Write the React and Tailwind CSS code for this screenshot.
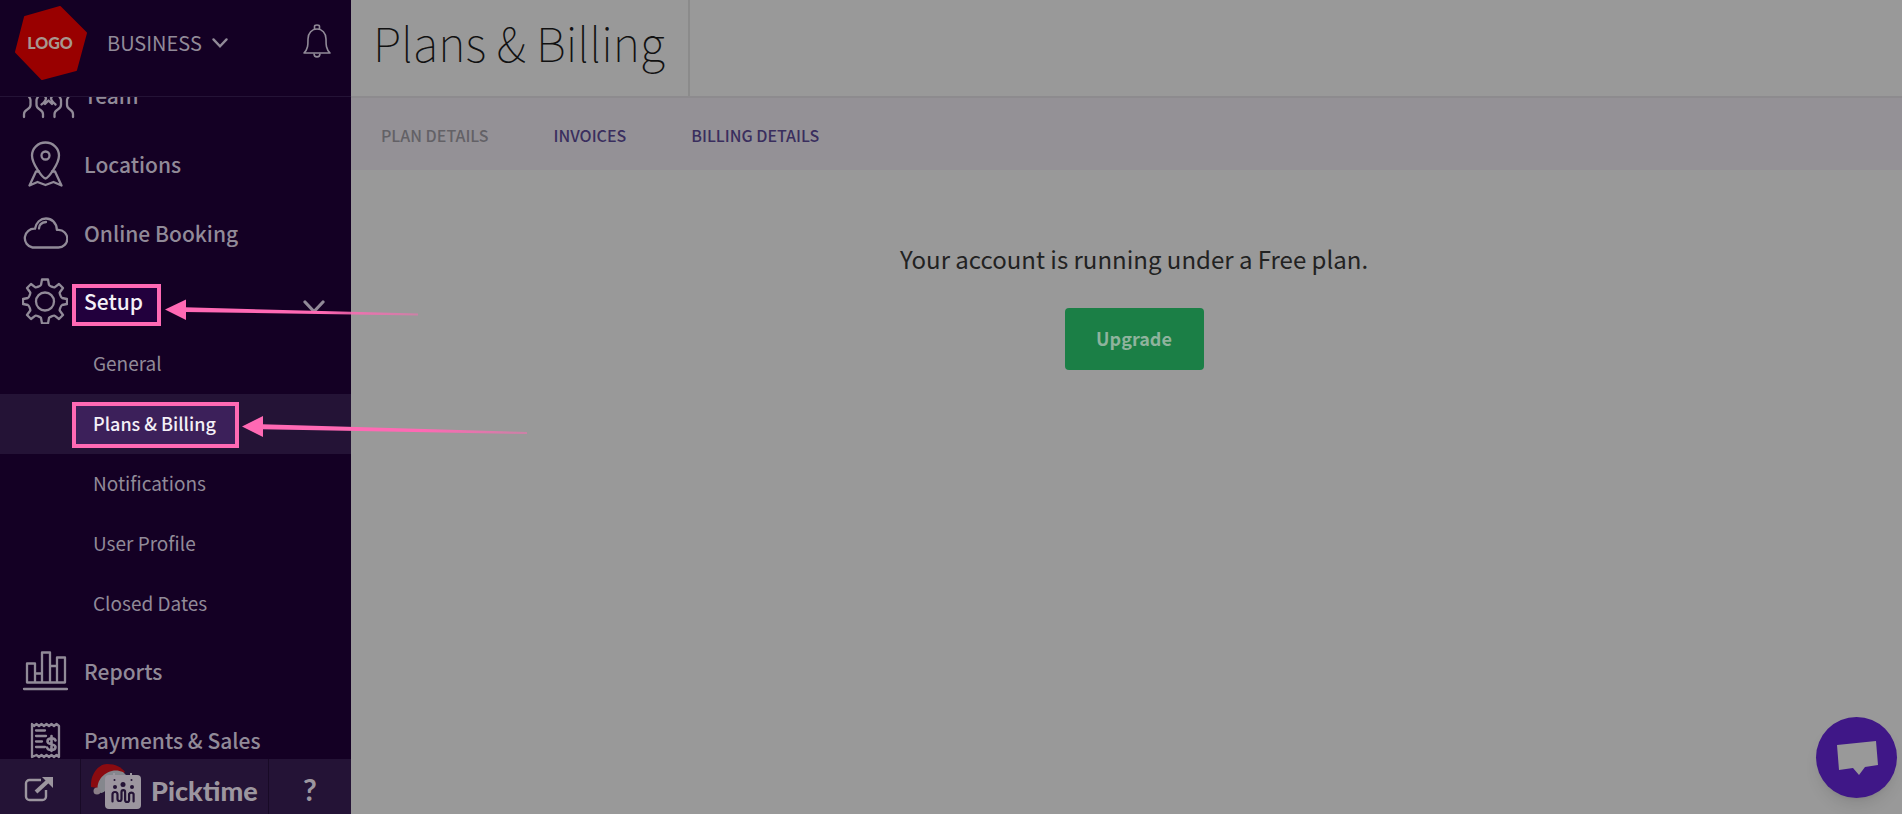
import React from "react";

const stroke = {
  fill: "none",
  stroke: "currentColor",
  strokeWidth: 2.3,
  strokeLinecap: "round",
  strokeLinejoin: "round",
};

function TeamIcon() {
  return (
    <svg width="53" height="48" viewBox="0 0 53 48" aria-hidden="true" {...stroke}>
      <path d="M2 46v-3c0-5 6.500-4 6.500-9v-5c0-2-3-4-3-8s2-8 6-8 6 4 6 8-3 6-3 8v5c0 5 6.500 4 6.500 9v3" />
      <path d="M32.500 46v-3c0-5 6.500-4 6.500-9v-5c0-2-3-4-3-8s2-8 6-8 6 4 6 8-3 6-3 8v5c0 5 6 4 6 9v3" />
      <path d="M19.500 33.500c2-2 4-2 4.500-6 0-2-3-3-3-7s2-7 5.500-7 5.500 3 5.500 7-3 5-3 7c.5 4 3 4 4.500 6M23 33l3.500-3.500 3.500 3.500" />
    </svg>
  );
}

function LocationIcon() {
  return (
    <svg width="46" height="46" viewBox="0 0 46 46" aria-hidden="true" {...stroke}>
      <path d="M23.500 37.500C21 37.500 10 23 10 14.500a13.500 13 0 0 1 27 0c0 8.500-11 23-13.500 23Z" />
      <circle cx="23.500" cy="14.500" r="4" />
      <path d="M17 30.500h-3L7.500 44.500l8-3.500 8 3 8-3 8 3.500L33 30.500h-3" />
    </svg>
  );
}

function CloudIcon() {
  return (
    <svg width="46" height="46" viewBox="0 0 46 46" aria-hidden="true" {...stroke}>
      <path d="M10.500 37.500h26a8.800 8.800 0 0 0 0-17.600h-1.600C34.500 12.500 29.500 8.500 24 8.500S14 12.500 13 18.700A9.500 9.500 0 0 0 10.500 37.500Z" />
      <path d="M17 18.500c0-3.800 3-6 7-6.500" />
    </svg>
  );
}

function GearIcon() {
  return (
    <svg width="46" height="46" viewBox="0 0 46 46" aria-hidden="true" {...stroke}>
      <path d="M20 1.500h6l1 5.500c0 .8 5 2.800 5.600 2.300L37 6l4 4-3.300 4.500c-.5.600 1.500 5.300 2.300 5.500l5 1v5l-5 1c-.8.200-2.800 5-2.300 5.500L41 37l-4 4-4.400-3.300c-.6-.5-5.600 1.500-5.600 2.300l-1 5.500h-6L19 40c0-.8-5-2.800-5.600-2.300L9 41l-4-4 3.300-4.500c.5-.5-1.500-5.300-2.300-5.500l-5-1v-5l5-1c.8-.2 2.800-4.900 2.300-5.500L5 10l4-4 4.400 3.300c.6.500 5.600-1.500 5.600-2.300Z" />
      <circle cx="23" cy="23.500" r="9" />
    </svg>
  );
}

function ReportsIcon() {
  return (
    <svg width="46" height="46" viewBox="0 0 46 46" aria-hidden="true" {...stroke}>
      <path d="M5 15.500h8v19H5zM20 4.500h8v30h-8zM35 9.500h8v25h-8zM13 25.500h7v9h-7zM28 18h7v16.500h-7zM2 41h43" />
    </svg>
  );
}

function ReceiptIcon() {
  return (
    <svg width="46" height="46" viewBox="0 0 46 46" aria-hidden="true" {...stroke}>
      <path d="M10 40V7l2 2 2.500-2L17 9l2.500-2L22 9l2.500-2L27 9l2.500-2L32 9l2.500-2L37 9v31l-2.500-2-2.500 2-2.500-2-2.500 2-2.500-2-2.500 2-2.500-2-2.500 2-2.500-2Z" />
      <path d="M14 13.500h9M14 19h10M14 24.500h6M14 30h9" />
      <path d="M33.500 23.500c-1-3-8-3-8 1 0 3.500 8 2 8 5.500 0 4-7.500 4-8.500.5M29.500 19v15" strokeWidth="2.600" />
    </svg>
  );
}

function Chevron({ size }) {
  return (
    <svg width={size} height={size} viewBox="0 0 22 22" aria-hidden="true" fill="none" stroke="currentColor" strokeWidth="3.200" strokeLinecap="round">
      <path d="m2 6 9 9.500L20 6" />
    </svg>
  );
}

function BrandMark() {
  return (
    <svg width="54" height="48" viewBox="0 0 54 48" aria-hidden="true">
      <path d="M1 24C0 12 8 1 17 1c9 0 14 3 18 8L15 26Z" fill="#8a0b10" />
      <path d="M8 28C5 15 20 3 33 9l5 5-23 14c-2 2-5 3-7 0Z" fill="#85878d" />
      <circle cx="7" cy="28" r="3.500" fill="#8a7f88" />
      <rect x="15" y="12" width="36" height="34" rx="4" fill="#9c969f" />
      <path d="M24 10v4M41 10v4" stroke="#9c969f" strokeWidth="2" />
      <g fill="#241336">
        <circle cx="25" cy="24" r="2" />
        <circle cx="33" cy="21.500" r="2.500" />
        <circle cx="42" cy="24" r="2" />
        <circle cx="24.500" cy="17" r="1" />
        <circle cx="41.500" cy="17" r="1" />
      </g>
      <path d="M22.500 38.500v-7a2.500 2.500 0 0 1 5 0v4.500a2 2 0 0 0 4 0v-7a1.800 1.800 0 0 1 3.600 0v8a2 2 0 0 0 4 0v-6a2.500 2.500 0 0 1 4.500 0v7.500" fill="none" stroke="#241336" strokeWidth="2.200" strokeLinecap="round" />
    </svg>
  );
}

function NavRow({ icon, children }) {
  return (
    <li>
      <a href="#" className="flex h-[69px] items-center pl-[22px]">
        <span className="w-[62px] shrink-0">{icon}</span>
        <span>{children}</span>
      </a>
    </li>
  );
}

function SubRow({ children }) {
  return (
    <li>
      <a href="#" className="flex h-[60px] items-center pb-[2px] pl-[93px]">{children}</a>
    </li>
  );
}

function Sidebar() {
  return (
    <aside className="flex h-screen w-[351px] shrink-0 flex-col bg-[#140024] text-[#918a98]">
      <header className="flex h-[97px] shrink-0 items-center border-b border-[#241336] pr-[19px] pb-[10px] pl-[14px]">
        <svg width="74" height="76" viewBox="0 0 74 76" role="img" aria-label="Logo">
          <path d="m46 2 26 26-10 37-34 9L2 47l9-35Z" fill="#990000" stroke="#990000" strokeWidth="2" strokeLinejoin="round" />
          <text x="36" y="44" textAnchor="middle" fill="#a8978f" className="font-[Lato] text-[16px] font-black">LOGO</text>
        </svg>
        <button type="button" className="ml-[19px] flex items-center gap-[10px] text-[20px] leading-7">
          BUSINESS
          <Chevron size={16} />
        </button>
        <button type="button" aria-label="Alerts" className="ml-auto pb-1">
          <svg width="30" height="36" viewBox="0 0 30 36" aria-hidden="true" fill="none" stroke="currentColor" strokeWidth="1.600" strokeLinejoin="round">
            <path d="M12.500 6V3.500c0-2 5-2 5 0V6M2 30c4-4 4-8 4-14 0-6 4-10 9-10s9 4 9 10c0 6 0 10 4 14Z" />
            <path d="M12 30.500c0 4.500 6 4.500 6 0" />
          </svg>
        </button>
      </header>

      <nav className="min-h-0 flex-1 overflow-hidden">
        <ul className="-mt-[37px] text-[21px] leading-8 font-medium">
          <NavRow icon={<TeamIcon />}>Team</NavRow>
          <NavRow icon={<LocationIcon />}>Locations</NavRow>
          <NavRow icon={<CloudIcon />}>Online Booking</NavRow>
          <li>
            <a href="#" className="flex h-[67px] items-center pr-[26px] pl-[22px]">
              <span className="w-[62px] shrink-0"><GearIcon /></span>
              <span className="relative isolate text-[#f4f0f7]">
                <span className="absolute -top-[1px] -left-[12px] -z-10 h-[42px] w-[89px] border-4 border-[#ff69b4] bg-[#22003d]" />
                Setup
              </span>
              <span className="ml-auto pt-3"><Chevron size={22} /></span>
            </a>
            <ul className="mb-[2px] text-[19px] leading-7 font-normal">
              <SubRow>General</SubRow>
              <li>
                <a href="#" className="flex h-[60px] items-center bg-[#241336] pb-[2px] pl-[93px] text-[#f4f0f7]">
                  <span className="relative isolate text-[18px] font-medium">
                    <span className="absolute -top-[7px] -left-[21px] -z-10 h-[46px] w-[167px] border-4 border-[#ff69b4] bg-[#3c205a]" />
                    Plans &amp; Billing
                  </span>
                </a>
              </li>
              <SubRow>Notifications</SubRow>
              <SubRow>User Profile</SubRow>
              <SubRow>Closed Dates</SubRow>
            </ul>
          </li>
          <NavRow icon={<ReportsIcon />}>Reports</NavRow>
          <NavRow icon={<ReceiptIcon />}>Payments &amp; Sales</NavRow>
        </ul>
      </nav>

      <footer className="flex h-[55px] shrink-0 bg-[#241336] text-[#9c969f]">
        <a href="#" aria-label="Open site" className="flex w-[81px] items-center border-r border-[#180a26] pt-1 pl-6">
          <svg width="30" height="28" viewBox="0 0 30 28" aria-hidden="true" fill="none" stroke="currentColor">
            <path d="M17 5H5.500A3.500 3.500 0 0 0 2 8.500v13A3.500 3.500 0 0 0 5.500 25h13a3.500 3.500 0 0 0 3.500-3.500V15" strokeWidth="2.400" />
            <path d="M12 17 24 6" strokeWidth="4" />
            <path d="M18 2h11v11Z" fill="currentColor" stroke="none" />
          </svg>
        </a>
        <a href="#" className="flex flex-1 items-center gap-[7px] border-r border-[#180a26] pl-[9px] font-[Lato] text-[27px] leading-8 font-black">
          <BrandMark />
          <span className="pt-2">Picktime</span>
        </a>
        <button type="button" className="w-[82px] pt-1 font-[Lato] text-[30px] leading-8 font-bold">?</button>
      </footer>
    </aside>
  );
}

function Pointers() {
  return (
    <svg width="530" height="160" viewBox="0 0 530 160" aria-hidden="true" className="pointer-events-none absolute top-[290px] left-0">
      <defs>
        <linearGradient id="fadeA" gradientUnits="userSpaceOnUse" x1="186" x2="418" y1="0" y2="0">
          <stop offset="0.600" stopColor="#ff69b4" />
          <stop offset="1" stopColor="#ff69b4" stopOpacity="0.500" />
        </linearGradient>
        <linearGradient id="fadeB" gradientUnits="userSpaceOnUse" x1="263" x2="527" y1="0" y2="0">
          <stop offset="0.600" stopColor="#ff69b4" />
          <stop offset="1" stopColor="#ff69b4" stopOpacity="0.500" />
        </linearGradient>
      </defs>
      <path d="m165 19.500 21-10v20.500Z" fill="#ff69b4" />
      <path d="M185 17.300 418 23.500v2L185 22Z" fill="url(#fadeA)" />
      <path d="m242 136.500 21-10.500v21Z" fill="#ff69b4" />
      <path d="M262 134.300 527 142v2L262 139.300Z" fill="url(#fadeB)" />
    </svg>
  );
}

export default function App() {
  return (
    <div className="relative flex min-h-screen bg-[#999999] font-['Noto_Sans_CJK_SC','Noto_Sans',sans-serif]">
      <Sidebar />
      <main className="min-w-0 flex-1">
        <header className="flex h-[96px]">
          <h1 className="flex items-center border-r-2 border-[#8b8b8b] pr-[23px] pb-[12px] pl-[22px] text-[47px] leading-[68px] font-thin text-[#111111]">
            Plans &amp; Billing
          </h1>
        </header>
        <nav className="flex h-[74px] items-center gap-[65px] border-t-2 border-[#8d8b8e] bg-[#949196] pt-[2px] pl-[30px] text-[16px] leading-6 font-medium text-[#3a2e5e]">
          <a href="#" className="text-[#636166]">PLAN DETAILS</a>
          <a href="#">INVOICES</a>
          <a href="#">BILLING DETAILS</a>
        </nav>
        <section className="flex flex-col items-center pt-[69px] pl-[15px] text-[#222222]">
          <p className="text-[24px] leading-10">Your account is running under a Free plan.</p>
          <button type="button" className="mt-[29px] h-[62px] w-[139px] rounded bg-[#1b7f46] pb-[2px] text-[18px] leading-7 font-bold text-[#8fb39d]">
            Upgrade
          </button>
        </section>
      </main>
      <Pointers />
      <button type="button" aria-label="Chat" className="fixed right-[5px] bottom-4 flex size-[81px] items-center justify-center rounded-full bg-[#3f1787] shadow-lg shadow-black/10">
        <svg width="42" height="36" viewBox="0 0 42 36" aria-hidden="true">
          <path d="m1 5 39-4 2 24-13 2-6 8-6-7-14 2Z" fill="#999999" />
        </svg>
      </button>
    </div>
  );
}
